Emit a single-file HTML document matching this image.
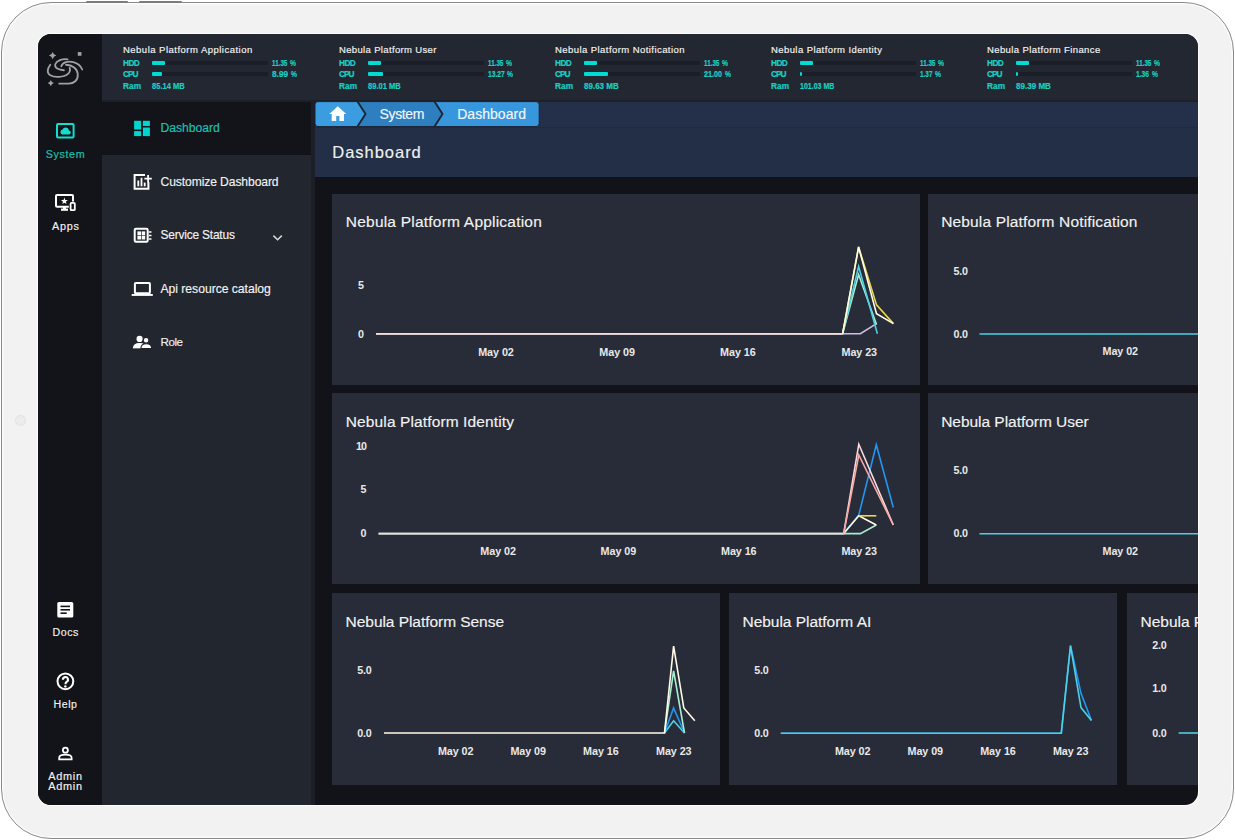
<!DOCTYPE html>
<html><head><meta charset="utf-8"><style>
html,body{margin:0;padding:0;}
body{width:1235px;height:840px;position:relative;overflow:hidden;background:#ffffff;font-family:"Liberation Sans",sans-serif;}
.frame{position:absolute;left:1px;top:2px;width:1231px;height:834.6px;border:1.7px solid #8a8a8a;border-radius:50px;background:#f2f2f2;box-shadow:inset 0 0 0 1.5px #fbfbfb;}
.btn{position:absolute;top:1px;height:1.6px;background:#7c7c7c;border-radius:1px;}
.cam{position:absolute;left:14.5px;top:415px;width:9px;height:9px;border-radius:50%;background:#ececec;border:1px solid #e2e2e2;}
.screen{position:absolute;left:38px;top:34px;width:1159.5px;height:771px;border-radius:13px;overflow:hidden;background:#111318;box-shadow:0 0 0 1px #fdfdfd;}
.r{position:absolute;}
.t{position:absolute;white-space:nowrap;line-height:1;-webkit-text-stroke:0.15px currentColor;}
.b{-webkit-text-stroke:0;}
.sb{-webkit-text-stroke:0.2px currentColor;}
.med{-webkit-text-stroke:0.17px currentColor;}
.abs{position:absolute;overflow:visible;}
</style></head><body>
<div class="frame"></div>
<div class="btn" style="left:86px;width:42px"></div>
<div class="btn" style="left:139px;width:43px"></div>
<div class="cam"></div>
<div class="screen">
<div class="r" style="left:0.00px;top:0.00px;width:64.00px;height:771.00px;background:#131419;"></div>
<div class="r" style="left:64.00px;top:0.00px;width:1096.00px;height:67.00px;background:#232731;"></div>
<div class="r" style="left:64.00px;top:67.00px;width:209.00px;height:704.00px;background:#22262f;"></div>
<div class="r" style="left:64.00px;top:67.00px;width:209.00px;height:54.00px;background:#131419;"></div>
<div class="r" style="left:273.00px;top:67.00px;width:4.00px;height:704.00px;background:#1c1f27;"></div>
<div class="r" style="left:277.00px;top:67.00px;width:883.00px;height:26.00px;background:#243049;"></div>
<div class="r" style="left:277.00px;top:93.00px;width:883.00px;height:50.00px;background:#232f47;"></div>
<div class="r" style="left:277.00px;top:92.60px;width:883.00px;height:1.00px;background:#1f2a3b;"></div>
<div class="r" style="left:64.00px;top:65.80px;width:1096.00px;height:1.80px;background:#1d2028;"></div>
<div class="t med" style="left:85.00px;top:11px;font-size:9.50px;color:#f2f2f2;letter-spacing:0.481px;">Nebula Platform Application</div>
<div class="t sb" style="left:85.00px;top:25px;font-size:8.29px;color:#19d0c4;letter-spacing:-0.576px;font-weight:bold;">HDD</div>
<div class="t sb" style="left:85.00px;top:36px;font-size:8.29px;color:#19d0c4;letter-spacing:-0.997px;font-weight:bold;">CPU</div>
<div class="t sb" style="left:85.00px;top:48px;font-size:8.29px;color:#19d0c4;letter-spacing:0.020px;font-weight:bold;">Ram</div>
<div class="r" style="left:114.00px;top:26.50px;width:116.00px;height:4.50px;background:#1b1e26;border-radius:1px;"></div>
<div class="r" style="left:114.00px;top:26.50px;width:13.17px;height:4.50px;background:#00dcd2;border-radius:1px;"></div>
<div class="r" style="left:114.00px;top:37.50px;width:116.00px;height:4.50px;background:#1b1e26;border-radius:1px;"></div>
<div class="r" style="left:114.00px;top:37.50px;width:10.43px;height:4.50px;background:#00dcd2;border-radius:1px;"></div>
<div class="t sb" style="left:234.00px;top:25px;font-size:8.29px;color:#19d0c4;letter-spacing:0.000px;transform:scaleX(0.7582);transform-origin:0.00px 0;font-weight:bold;">11.35</div>
<div class="t sb" style="left:252.00px;top:25px;font-size:8.29px;color:#19d0c4;letter-spacing:0.000px;transform:scaleX(0.8132);transform-origin:0.00px 0;font-weight:bold;">%</div>
<div class="t sb" style="left:234.00px;top:36px;font-size:8.29px;color:#19d0c4;letter-spacing:0.000px;transform:scaleX(0.9959);transform-origin:0.00px 0;font-weight:bold;">8.99</div>
<div class="t sb" style="left:252.70px;top:36px;font-size:8.29px;color:#19d0c4;letter-spacing:0.000px;transform:scaleX(0.8132);transform-origin:0.00px 0;font-weight:bold;">%</div>
<div class="t sb" style="left:114.00px;top:48px;font-size:8.29px;color:#19d0c4;letter-spacing:0.000px;transform:scaleX(0.9117);transform-origin:0.00px 0;font-weight:bold;">85.14 MB</div>
<div class="t med" style="left:301.00px;top:11px;font-size:9.50px;color:#f2f2f2;letter-spacing:0.347px;">Nebula Platform User</div>
<div class="t sb" style="left:301.00px;top:25px;font-size:8.29px;color:#19d0c4;letter-spacing:-0.576px;font-weight:bold;">HDD</div>
<div class="t sb" style="left:301.00px;top:36px;font-size:8.29px;color:#19d0c4;letter-spacing:-0.997px;font-weight:bold;">CPU</div>
<div class="t sb" style="left:301.00px;top:48px;font-size:8.29px;color:#19d0c4;letter-spacing:0.020px;font-weight:bold;">Ram</div>
<div class="r" style="left:330.00px;top:26.50px;width:116.00px;height:4.50px;background:#1b1e26;border-radius:1px;"></div>
<div class="r" style="left:330.00px;top:26.50px;width:13.17px;height:4.50px;background:#00dcd2;border-radius:1px;"></div>
<div class="r" style="left:330.00px;top:37.50px;width:116.00px;height:4.50px;background:#1b1e26;border-radius:1px;"></div>
<div class="r" style="left:330.00px;top:37.50px;width:15.39px;height:4.50px;background:#00dcd2;border-radius:1px;"></div>
<div class="t sb" style="left:450.00px;top:25px;font-size:8.29px;color:#19d0c4;letter-spacing:0.000px;transform:scaleX(0.7582);transform-origin:0.00px 0;font-weight:bold;">11.35</div>
<div class="t sb" style="left:468.00px;top:25px;font-size:8.29px;color:#19d0c4;letter-spacing:0.000px;transform:scaleX(0.8132);transform-origin:0.00px 0;font-weight:bold;">%</div>
<div class="t sb" style="left:450.00px;top:36px;font-size:8.29px;color:#19d0c4;letter-spacing:0.000px;transform:scaleX(0.8106);transform-origin:0.00px 0;font-weight:bold;">13.27</div>
<div class="t sb" style="left:469.40px;top:36px;font-size:8.29px;color:#19d0c4;letter-spacing:0.000px;transform:scaleX(0.8132);transform-origin:0.00px 0;font-weight:bold;">%</div>
<div class="t sb" style="left:330.00px;top:48px;font-size:8.29px;color:#19d0c4;letter-spacing:0.000px;transform:scaleX(0.9117);transform-origin:0.00px 0;font-weight:bold;">89.01 MB</div>
<div class="t med" style="left:517.00px;top:11px;font-size:9.50px;color:#f2f2f2;letter-spacing:0.435px;">Nebula Platform Notification</div>
<div class="t sb" style="left:517.00px;top:25px;font-size:8.29px;color:#19d0c4;letter-spacing:-0.576px;font-weight:bold;">HDD</div>
<div class="t sb" style="left:517.00px;top:36px;font-size:8.29px;color:#19d0c4;letter-spacing:-0.997px;font-weight:bold;">CPU</div>
<div class="t sb" style="left:517.00px;top:48px;font-size:8.29px;color:#19d0c4;letter-spacing:0.020px;font-weight:bold;">Ram</div>
<div class="r" style="left:546.00px;top:26.50px;width:116.00px;height:4.50px;background:#1b1e26;border-radius:1px;"></div>
<div class="r" style="left:546.00px;top:26.50px;width:13.17px;height:4.50px;background:#00dcd2;border-radius:1px;"></div>
<div class="r" style="left:546.00px;top:37.50px;width:116.00px;height:4.50px;background:#1b1e26;border-radius:1px;"></div>
<div class="r" style="left:546.00px;top:37.50px;width:24.36px;height:4.50px;background:#00dcd2;border-radius:1px;"></div>
<div class="t sb" style="left:666.00px;top:25px;font-size:8.29px;color:#19d0c4;letter-spacing:0.000px;transform:scaleX(0.7582);transform-origin:0.00px 0;font-weight:bold;">11.35</div>
<div class="t sb" style="left:684.00px;top:25px;font-size:8.29px;color:#19d0c4;letter-spacing:0.000px;transform:scaleX(0.8132);transform-origin:0.00px 0;font-weight:bold;">%</div>
<div class="t sb" style="left:666.00px;top:36px;font-size:8.29px;color:#19d0c4;letter-spacing:0.000px;transform:scaleX(0.8733);transform-origin:0.00px 0;font-weight:bold;">21.00</div>
<div class="t sb" style="left:686.70px;top:36px;font-size:8.29px;color:#19d0c4;letter-spacing:0.000px;transform:scaleX(0.8132);transform-origin:0.00px 0;font-weight:bold;">%</div>
<div class="t sb" style="left:546.00px;top:48px;font-size:8.29px;color:#19d0c4;letter-spacing:0.000px;transform:scaleX(0.9672);transform-origin:0.00px 0;font-weight:bold;">89.63 MB</div>
<div class="t med" style="left:733.00px;top:11px;font-size:9.50px;color:#f2f2f2;letter-spacing:0.414px;">Nebula Platform Identity</div>
<div class="t sb" style="left:733.00px;top:25px;font-size:8.29px;color:#19d0c4;letter-spacing:-0.576px;font-weight:bold;">HDD</div>
<div class="t sb" style="left:733.00px;top:36px;font-size:8.29px;color:#19d0c4;letter-spacing:-0.997px;font-weight:bold;">CPU</div>
<div class="t sb" style="left:733.00px;top:48px;font-size:8.29px;color:#19d0c4;letter-spacing:0.020px;font-weight:bold;">Ram</div>
<div class="r" style="left:762.00px;top:26.50px;width:116.00px;height:4.50px;background:#1b1e26;border-radius:1px;"></div>
<div class="r" style="left:762.00px;top:26.50px;width:13.17px;height:4.50px;background:#00dcd2;border-radius:1px;"></div>
<div class="r" style="left:762.00px;top:37.50px;width:116.00px;height:4.50px;background:#1b1e26;border-radius:1px;"></div>
<div class="r" style="left:762.00px;top:37.50px;width:1.59px;height:4.50px;background:#00dcd2;border-radius:1px;"></div>
<div class="t sb" style="left:882.00px;top:25px;font-size:8.29px;color:#19d0c4;letter-spacing:0.000px;transform:scaleX(0.7582);transform-origin:0.00px 0;font-weight:bold;">11.35</div>
<div class="t sb" style="left:900.00px;top:25px;font-size:8.29px;color:#19d0c4;letter-spacing:0.000px;transform:scaleX(0.8132);transform-origin:0.00px 0;font-weight:bold;">%</div>
<div class="t sb" style="left:882.00px;top:36px;font-size:8.29px;color:#19d0c4;letter-spacing:0.000px;transform:scaleX(0.7733);transform-origin:0.00px 0;font-weight:bold;">1.37</div>
<div class="t sb" style="left:897.10px;top:36px;font-size:8.29px;color:#19d0c4;letter-spacing:0.000px;transform:scaleX(0.8132);transform-origin:0.00px 0;font-weight:bold;">%</div>
<div class="t sb" style="left:762.00px;top:48px;font-size:8.29px;color:#19d0c4;letter-spacing:0.000px;transform:scaleX(0.8461);transform-origin:0.00px 0;font-weight:bold;">101.03 MB</div>
<div class="t med" style="left:949.00px;top:11px;font-size:9.50px;color:#f2f2f2;letter-spacing:0.393px;">Nebula Platform Finance</div>
<div class="t sb" style="left:949.00px;top:25px;font-size:8.29px;color:#19d0c4;letter-spacing:-0.576px;font-weight:bold;">HDD</div>
<div class="t sb" style="left:949.00px;top:36px;font-size:8.29px;color:#19d0c4;letter-spacing:-0.997px;font-weight:bold;">CPU</div>
<div class="t sb" style="left:949.00px;top:48px;font-size:8.29px;color:#19d0c4;letter-spacing:0.020px;font-weight:bold;">Ram</div>
<div class="r" style="left:978.00px;top:26.50px;width:116.00px;height:4.50px;background:#1b1e26;border-radius:1px;"></div>
<div class="r" style="left:978.00px;top:26.50px;width:13.17px;height:4.50px;background:#00dcd2;border-radius:1px;"></div>
<div class="r" style="left:978.00px;top:37.50px;width:116.00px;height:4.50px;background:#1b1e26;border-radius:1px;"></div>
<div class="r" style="left:978.00px;top:37.50px;width:1.58px;height:4.50px;background:#00dcd2;border-radius:1px;"></div>
<div class="t sb" style="left:1098.00px;top:25px;font-size:8.29px;color:#19d0c4;letter-spacing:0.000px;transform:scaleX(0.7582);transform-origin:0.00px 0;font-weight:bold;">11.35</div>
<div class="t sb" style="left:1116.00px;top:25px;font-size:8.29px;color:#19d0c4;letter-spacing:0.000px;transform:scaleX(0.8132);transform-origin:0.00px 0;font-weight:bold;">%</div>
<div class="t sb" style="left:1098.00px;top:36px;font-size:8.29px;color:#19d0c4;letter-spacing:0.000px;transform:scaleX(0.8104);transform-origin:0.00px 0;font-weight:bold;">1.36</div>
<div class="t sb" style="left:1113.70px;top:36px;font-size:8.29px;color:#19d0c4;letter-spacing:0.000px;transform:scaleX(0.8132);transform-origin:0.00px 0;font-weight:bold;">%</div>
<div class="t sb" style="left:978.00px;top:48px;font-size:8.29px;color:#19d0c4;letter-spacing:0.000px;transform:scaleX(0.9728);transform-origin:0.00px 0;font-weight:bold;">89.39 MB</div>
<div class="t" style="left:122.50px;top:88px;font-size:12.21px;color:#19c2b4;letter-spacing:-0.044px;">Dashboard</div>
<div class="t" style="left:122.50px;top:142px;font-size:12.11px;color:#f2f2f2;letter-spacing:-0.096px;">Customize Dashboard</div>
<div class="t" style="left:122.50px;top:196px;font-size:11.91px;color:#f2f2f2;letter-spacing:-0.185px;">Service Status</div>
<div class="t" style="left:122.50px;top:249px;font-size:12.20px;color:#f2f2f2;letter-spacing:-0.039px;">Api resource catalog</div>
<div class="t" style="left:122.50px;top:302px;font-size:11.61px;color:#f2f2f2;letter-spacing:-0.461px;">Role</div>
<div class="t" style="left:7.70px;top:115px;font-size:10.78px;color:#19c2b4;letter-spacing:0.614px;">System</div>
<div class="t" style="left:14.00px;top:187px;font-size:10.85px;color:#f2f2f2;letter-spacing:0.756px;">Apps</div>
<div class="t" style="left:14.40px;top:593px;font-size:10.63px;color:#f2f2f2;letter-spacing:0.590px;">Docs</div>
<div class="t" style="left:15.60px;top:665px;font-size:10.62px;color:#f2f2f2;letter-spacing:0.521px;">Help</div>
<div class="t" style="left:10.20px;top:737px;font-size:10.91px;color:#f2f2f2;letter-spacing:0.745px;">Admin</div>
<div class="t" style="left:10.20px;top:747px;font-size:10.91px;color:#f2f2f2;letter-spacing:0.745px;">Admin</div>
<svg class="abs" style="left:277px;top:67px" width="240" height="30" viewBox="315 101 240 30">
<path d="M318 101.6 H357.5 L365.5 114 L357.5 126.6 H318 Q315 126.6 315 123.6 V104.6 Q315 101.6 318 101.6Z" fill="#3b9de0"/>
<path d="M357.5 101.6 H434.5 L442.5 114 L434.5 126.6 H357.5 L365.5 114Z" fill="#2e7fbf"/>
<path d="M434.5 101.6 H536 Q539.2 101.6 539.2 104.8 V123.4 Q539.2 126.6 536 126.6 H434.5 L442.5 114Z" fill="#3897dc"/>
<path d="M318 101.6 H536 Q539.2 101.6 539.2 104.8 V123.4 Q539.2 126.6 536 126.6 H318 Q315 126.6 315 123.6 V104.6 Q315 101.6 318 101.6Z" fill="none" stroke="#1a2233" stroke-width="1"/>
<path d="M357.5 101.6 L365.5 114 L357.5 126.6" fill="none" stroke="#1c2535" stroke-width="1.9"/>
<path d="M434.5 101.6 L442.5 114 L434.5 126.6" fill="none" stroke="#1c2535" stroke-width="1.9"/>
<path d="M337.8 106.3 L346.2 113.9 H344 V120.9 H339.4 V116 H336.2 V120.9 H331.7 V113.9 H329.3Z" fill="#ffffff"/>
</svg>
<div class="t" style="left:341.50px;top:73px;font-size:14.00px;color:#f2f6fa;letter-spacing:-0.355px;">System</div>
<div class="t" style="left:419.20px;top:73px;font-size:14.00px;color:#f2f6fa;letter-spacing:0.039px;">Dashboard</div>
<div class="t" style="left:294.30px;top:110px;font-size:16.50px;color:#f0f0f0;letter-spacing:0.973px;">Dashboard</div>
<div class="r" style="left:294.00px;top:159.50px;width:587.50px;height:191.20px;background:#282c38;"></div>
<div class="r" style="left:890.00px;top:159.50px;width:587.00px;height:191.20px;background:#282c38;"></div>
<div class="r" style="left:294.00px;top:359.30px;width:587.50px;height:191.20px;background:#282c38;"></div>
<div class="r" style="left:890.00px;top:359.30px;width:587.00px;height:191.20px;background:#282c38;"></div>
<div class="r" style="left:294.00px;top:558.90px;width:388.00px;height:191.70px;background:#282c38;"></div>
<div class="r" style="left:690.80px;top:558.90px;width:388.40px;height:191.70px;background:#282c38;"></div>
<div class="r" style="left:1088.80px;top:558.90px;width:387.20px;height:191.70px;background:#282c38;"></div>
<div class="t" style="left:307.80px;top:180px;font-size:15.50px;color:#f2f2f2;letter-spacing:0.215px;">Nebula Platform Application</div>
<div class="t" style="left:903.20px;top:180px;font-size:15.50px;color:#f2f2f2;letter-spacing:0.155px;">Nebula Platform Notification</div>
<div class="t" style="left:307.80px;top:380px;font-size:15.50px;color:#f2f2f2;letter-spacing:0.117px;">Nebula Platform Identity</div>
<div class="t" style="left:903.20px;top:380px;font-size:15.50px;color:#f2f2f2;letter-spacing:-0.035px;">Nebula Platform User</div>
<div class="t" style="left:307.60px;top:580px;font-size:15.50px;color:#f2f2f2;letter-spacing:-0.049px;">Nebula Platform Sense</div>
<div class="t" style="left:704.50px;top:580px;font-size:15.50px;color:#f2f2f2;letter-spacing:-0.028px;">Nebula Platform AI</div>
<div class="t" style="left:1102.60px;top:580px;font-size:15.50px;color:#f2f2f2;letter-spacing:-0.026px;">Nebula Platform Finance</div>
<div class="t b" style="left:320.00px;top:246px;font-size:10.71px;color:#e9e9e9;letter-spacing:0.000px;font-weight:bold;">5</div>
<div class="t b" style="left:320.00px;top:295px;font-size:10.71px;color:#e9e9e9;letter-spacing:0.000px;font-weight:bold;">0</div>
<div class="t b" style="left:440.20px;top:313px;font-size:10.77px;color:#e9e9e9;letter-spacing:-0.061px;font-weight:bold;">May 02</div>
<div class="t b" style="left:561.30px;top:313px;font-size:10.77px;color:#e9e9e9;letter-spacing:-0.061px;font-weight:bold;">May 09</div>
<div class="t b" style="left:682.10px;top:313px;font-size:10.77px;color:#e9e9e9;letter-spacing:-0.061px;font-weight:bold;">May 16</div>
<div class="t b" style="left:803.50px;top:313px;font-size:10.77px;color:#e9e9e9;letter-spacing:-0.061px;font-weight:bold;">May 23</div>
<div class="t b" style="left:915.50px;top:232px;font-size:10.71px;color:#e9e9e9;letter-spacing:-0.196px;font-weight:bold;">5.0</div>
<div class="t b" style="left:915.50px;top:295px;font-size:10.71px;color:#e9e9e9;letter-spacing:-0.196px;font-weight:bold;">0.0</div>
<div class="t b" style="left:1064.50px;top:312px;font-size:10.77px;color:#e9e9e9;letter-spacing:-0.061px;font-weight:bold;">May 02</div>
<div class="t b" style="left:318.10px;top:407px;font-size:10.71px;color:#e9e9e9;letter-spacing:-1.116px;font-weight:bold;">10</div>
<div class="t b" style="left:322.40px;top:450px;font-size:10.71px;color:#e9e9e9;letter-spacing:0.000px;font-weight:bold;">5</div>
<div class="t b" style="left:322.40px;top:494px;font-size:10.71px;color:#e9e9e9;letter-spacing:0.000px;font-weight:bold;">0</div>
<div class="t b" style="left:442.30px;top:512px;font-size:10.77px;color:#e9e9e9;letter-spacing:-0.061px;font-weight:bold;">May 02</div>
<div class="t b" style="left:562.60px;top:512px;font-size:10.77px;color:#e9e9e9;letter-spacing:-0.061px;font-weight:bold;">May 09</div>
<div class="t b" style="left:683.00px;top:512px;font-size:10.77px;color:#e9e9e9;letter-spacing:-0.061px;font-weight:bold;">May 16</div>
<div class="t b" style="left:803.40px;top:512px;font-size:10.77px;color:#e9e9e9;letter-spacing:-0.061px;font-weight:bold;">May 23</div>
<div class="t b" style="left:915.50px;top:431px;font-size:10.71px;color:#e9e9e9;letter-spacing:-0.196px;font-weight:bold;">5.0</div>
<div class="t b" style="left:915.50px;top:494px;font-size:10.71px;color:#e9e9e9;letter-spacing:-0.196px;font-weight:bold;">0.0</div>
<div class="t b" style="left:1064.50px;top:512px;font-size:10.77px;color:#e9e9e9;letter-spacing:-0.061px;font-weight:bold;">May 02</div>
<div class="t b" style="left:319.30px;top:631px;font-size:10.71px;color:#e9e9e9;letter-spacing:-0.196px;font-weight:bold;">5.0</div>
<div class="t b" style="left:319.30px;top:694px;font-size:10.71px;color:#e9e9e9;letter-spacing:-0.196px;font-weight:bold;">0.0</div>
<div class="t b" style="left:399.90px;top:712px;font-size:10.77px;color:#e9e9e9;letter-spacing:-0.061px;font-weight:bold;">May 02</div>
<div class="t b" style="left:472.40px;top:712px;font-size:10.77px;color:#e9e9e9;letter-spacing:-0.061px;font-weight:bold;">May 09</div>
<div class="t b" style="left:545.10px;top:712px;font-size:10.77px;color:#e9e9e9;letter-spacing:-0.061px;font-weight:bold;">May 16</div>
<div class="t b" style="left:618.00px;top:712px;font-size:10.77px;color:#e9e9e9;letter-spacing:-0.061px;font-weight:bold;">May 23</div>
<div class="t b" style="left:716.25px;top:631px;font-size:10.71px;color:#e9e9e9;letter-spacing:-0.196px;font-weight:bold;">5.0</div>
<div class="t b" style="left:716.25px;top:694px;font-size:10.71px;color:#e9e9e9;letter-spacing:-0.196px;font-weight:bold;">0.0</div>
<div class="t b" style="left:796.90px;top:712px;font-size:10.77px;color:#e9e9e9;letter-spacing:-0.061px;font-weight:bold;">May 02</div>
<div class="t b" style="left:869.50px;top:712px;font-size:10.77px;color:#e9e9e9;letter-spacing:-0.061px;font-weight:bold;">May 09</div>
<div class="t b" style="left:942.20px;top:712px;font-size:10.77px;color:#e9e9e9;letter-spacing:-0.061px;font-weight:bold;">May 16</div>
<div class="t b" style="left:1014.90px;top:712px;font-size:10.77px;color:#e9e9e9;letter-spacing:-0.061px;font-weight:bold;">May 23</div>
<div class="t b" style="left:1114.20px;top:606px;font-size:10.71px;color:#e9e9e9;letter-spacing:-0.196px;font-weight:bold;">2.0</div>
<div class="t b" style="left:1114.20px;top:649px;font-size:10.71px;color:#e9e9e9;letter-spacing:-0.196px;font-weight:bold;">1.0</div>
<div class="t b" style="left:1114.20px;top:694px;font-size:10.71px;color:#e9e9e9;letter-spacing:-0.196px;font-weight:bold;">0.0</div>
<svg class="abs" style="left:0;top:0" width="1160" height="771" viewBox="38 34 1160 771">
<polyline points="376.0,333.8 842.6,333.8 860.4,333.8 876.5,323.6" fill="none" stroke="#cdbfe8" stroke-width="1.6" stroke-linejoin="miter"/>
<polyline points="842.6,333.8 858.6,274.6 876.5,324.5" fill="none" stroke="#a8efd2" stroke-width="1.6" stroke-linejoin="miter"/>
<polyline points="842.6,333.8 858.6,266.5 877.4,333.8" fill="none" stroke="#4dd0e1" stroke-width="1.6" stroke-linejoin="miter"/>
<polyline points="842.6,333.8 858.6,247.0 876.5,304.9 893.4,323.6" fill="none" stroke="#e8d84a" stroke-width="1.6" stroke-linejoin="miter"/>
<polyline points="376.0,333.8 842.6,333.8 858.6,247.0 876.5,313.8 893.4,323.6" fill="none" stroke="#fffbe6" stroke-width="1.6" stroke-linejoin="miter"/>
<polyline points="376.0,333.8 842.6,333.8" fill="none" stroke="#fbd9dd" stroke-width="1.6" stroke-linejoin="miter"/>
<polyline points="979.5,334.0 1198.0,334.0" fill="none" stroke="#4ccfe6" stroke-width="1.6" stroke-linejoin="miter"/>
<polyline points="843.7,533.6 858.8,515.0 876.3,444.7 893.3,507.5" fill="none" stroke="#2196f3" stroke-width="1.6" stroke-linejoin="miter"/>
<polyline points="378.6,533.6 843.7,533.6 860.4,533.6 876.3,525.0" fill="none" stroke="#a8efd2" stroke-width="1.6" stroke-linejoin="miter"/>
<polyline points="843.7,533.6 858.8,515.8 876.3,525.0" fill="none" stroke="#fffbe6" stroke-width="1.6" stroke-linejoin="miter"/>
<polyline points="858.8,515.8 876.3,515.8" fill="none" stroke="#e8d84a" stroke-width="1.6" stroke-linejoin="miter"/>
<polyline points="378.6,533.6 843.7,533.6 858.8,444.2 893.3,525.0" fill="none" stroke="#fbd9dd" stroke-width="1.6" stroke-linejoin="miter"/>
<polyline points="843.7,533.6 858.8,455.0 893.3,525.0" fill="none" stroke="#f6a9a3" stroke-width="1.6" stroke-linejoin="miter"/>
<polyline points="979.5,533.7 1198.0,533.7" fill="none" stroke="#4ccfe6" stroke-width="1.6" stroke-linejoin="miter"/>
<polyline points="664.5,733.0 673.6,720.7 684.5,733.0" fill="none" stroke="#4dd0e1" stroke-width="1.6" stroke-linejoin="miter"/>
<polyline points="664.5,733.0 673.6,708.0 684.5,733.0" fill="none" stroke="#2196f3" stroke-width="1.6" stroke-linejoin="miter"/>
<polyline points="664.5,733.0 673.6,670.8 684.5,733.0" fill="none" stroke="#a8efd2" stroke-width="1.6" stroke-linejoin="miter"/>
<polyline points="384.0,733.0 664.5,733.0 673.6,646.2 683.8,708.0 694.8,720.7" fill="none" stroke="#fffbe6" stroke-width="1.6" stroke-linejoin="miter"/>
<polyline points="780.8,733.2 1061.3,733.2 1070.5,645.7 1081.0,693.3 1091.4,720.4" fill="none" stroke="#2196f3" stroke-width="1.6" stroke-linejoin="miter"/>
<polyline points="780.8,733.2 1061.3,733.2 1070.5,645.7 1081.0,707.6 1091.4,720.4" fill="none" stroke="#4dd0e1" stroke-width="1.6" stroke-linejoin="miter"/>
<polyline points="1178.7,733.0 1198.0,733.0" fill="none" stroke="#4dd0e1" stroke-width="1.6" stroke-linejoin="miter"/>
</svg>

<svg class="abs" style="left:0;top:0" width="1160" height="771" viewBox="38 34 1160 771">
 <!-- logo -->
 <g transform="translate(44 48) scale(0.05238)" fill="none" stroke="#a0a0a8" stroke-width="34" stroke-linecap="round">
  <path d="M120,320 C60,400 50,480 120,520 C200,570 380,560 450,500 C500,460 500,410 490,380"/>
  <path d="M450,215 C350,200 240,240 215,310 C195,380 280,425 380,425"/>
  <path d="M330,350 C350,270 460,240 560,270 C640,290 700,340 730,410"/>
  <path d="M420,320 C540,320 640,400 645,500 C650,620 570,680 470,680 L290,680"/>
  <path d="M165,75 Q180,130 235,145 Q180,160 165,215 Q150,160 95,145 Q150,130 165,75Z" fill="#a0a0a8" stroke="none"/>
  <path d="M130,610 Q143,657 190,670 Q143,683 130,730 Q117,683 70,670 Q117,657 130,610Z" fill="#a0a0a8" stroke="none"/>
  <rect x="645" y="78" width="70" height="70" fill="#a0a0a8" stroke="none"/>
 </g>
 <!-- system icon -->
 <rect x="57" y="124.1" width="16.6" height="13.5" rx="1" fill="none" stroke="#14dccf" stroke-width="2"/>
 <path d="M62.3 134.4 H68.6 A2 2 0 0 0 68.9 130.4 A3.3 3.3 0 0 0 62.6 129.6 A2.45 2.45 0 0 0 62.3 134.4Z" fill="#14dccf"/>
 <!-- apps icon -->
 <path d="M68.8 206.8 H57 Q56 206.8 56 205.8 V196 Q56 195 57 195 H72 Q73 195 73 196 V201.6" fill="none" stroke="#fff" stroke-width="2"/>
 <rect x="63" y="206.5" width="3" height="2.5" fill="#fff"/>
 <rect x="61" y="208.6" width="7" height="2.2" fill="#fff"/>
 <rect x="70.6" y="202.9" width="4.2" height="7.3" rx="0.8" fill="none" stroke="#fff" stroke-width="1.8"/>
 <path d="M64.40,197.60 L65.28,199.99 L67.82,200.09 L65.83,201.66 L66.52,204.11 L64.40,202.70 L62.28,204.11 L62.97,201.66 L60.98,200.09 L63.52,199.99Z" fill="#fff"/>
 <!-- docs icon -->
 <rect x="57.3" y="602" width="16" height="15.6" rx="1.6" fill="#fff"/>
 <rect x="60.5" y="605.6" width="9.5" height="1.6" fill="#131419"/>
 <rect x="60.5" y="609" width="9.5" height="1.6" fill="#131419"/>
 <rect x="60.5" y="612.4" width="6.2" height="1.6" fill="#131419"/>
 <!-- help icon -->
 <circle cx="65.4" cy="681.3" r="7.9" fill="none" stroke="#fff" stroke-width="2"/>
 <path d="M62.9 679.7 A2.55 2.55 0 1 1 66.6 681.9 Q65.5 682.6 65.5 684.2" fill="none" stroke="#fff" stroke-width="2.1"/>
 <circle cx="65.4" cy="686.4" r="1.2" fill="#fff"/>
 <!-- admin icon -->
 <circle cx="65.4" cy="750.2" r="2.5" fill="none" stroke="#fff" stroke-width="1.8"/>
 <path d="M59.2 759.3 V757.8 Q59.2 754.6 65.4 754.6 Q71.6 754.6 71.6 757.8 V759.3Z" fill="none" stroke="#fff" stroke-width="1.8"/>
 <!-- menu: dashboard -->
 <g fill="#00d6cf">
  <rect x="134.1" y="120.8" width="7" height="8.7"/>
  <rect x="142.9" y="120.8" width="7" height="5.2"/>
  <rect x="134.1" y="131.1" width="7" height="5"/>
  <rect x="142.9" y="127.5" width="7" height="8.6"/>
 </g>
 <!-- menu: customize -->
 <path d="M145 175 H134.6 V188.8 H148.4 V182" fill="none" stroke="#fff" stroke-width="2"/>
 <rect x="137.4" y="180.5" width="1.8" height="5.8" fill="#fff"/>
 <rect x="140.6" y="177.8" width="1.8" height="8.5" fill="#fff"/>
 <rect x="143.8" y="182.6" width="1.8" height="3.7" fill="#fff"/>
 <path d="M148.1 175 V182.4 M144.4 178.7 H151.8" stroke="#fff" stroke-width="1.8"/>
 <!-- menu: service status -->
 <rect x="134.7" y="228.7" width="13" height="13" rx="1.2" fill="none" stroke="#fff" stroke-width="2"/>
 <rect x="137.4" y="231.4" width="3.9" height="3.6" fill="#fff"/>
 <rect x="142" y="231.4" width="3.2" height="3.6" fill="#fff"/>
 <rect x="137.4" y="235.6" width="3.9" height="3.9" fill="#fff"/>
 <rect x="142" y="235.6" width="3.2" height="3.9" fill="#fff"/>
 <path d="M148.6 232 H151.5 M148.6 235.5 H151.5 M148.6 239 H151.5" stroke="#fff" stroke-width="1.3"/>
 <!-- menu: laptop -->
 <rect x="134.9" y="282.9" width="15" height="10.4" rx="0.8" fill="none" stroke="#fff" stroke-width="2"/>
 <rect x="131.7" y="294" width="21.1" height="1.9" fill="#fff"/>
 <!-- menu: role -->
 <circle cx="139.6" cy="338.9" r="3.1" fill="#fff"/>
 <path d="M132.8 348.6 Q132.8 342.9 139.5 342.9 Q146.2 342.9 146.2 348.6Z" fill="#fff"/>
 <circle cx="146.1" cy="340.2" r="2.8" fill="#fff" stroke="#22262f" stroke-width="1.1"/>
 <path d="M140.9 348.6 Q140.9 343.7 146.3 343.7 Q151.7 343.7 151.7 348.6Z" fill="#fff" stroke="#22262f" stroke-width="1.1"/>
 <rect x="132" y="348.7" width="21" height="1.5" fill="#22262f"/>
 <!-- chevron -->
 <path d="M273.4 235.6 L277.6 239.8 L281.8 235.6" fill="none" stroke="#d8d8d8" stroke-width="1.5"/>
</svg>

</div>
</body></html>
